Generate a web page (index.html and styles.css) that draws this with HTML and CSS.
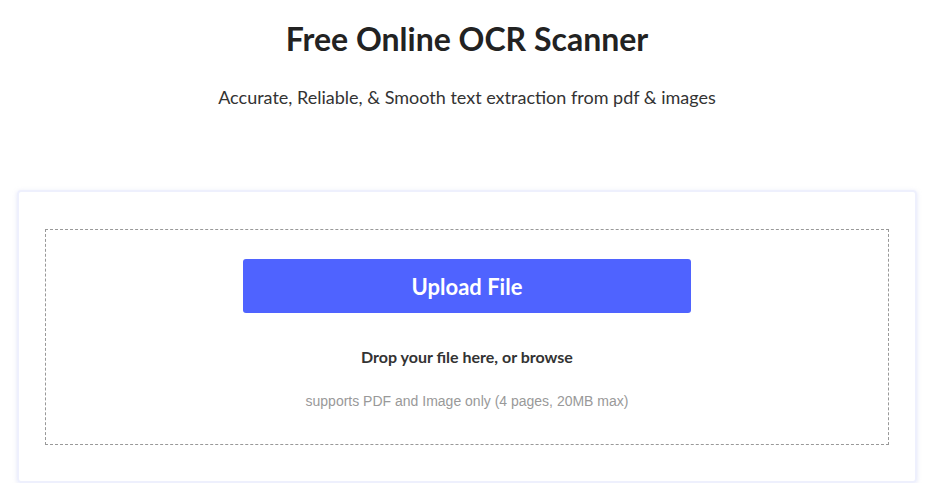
FILE: index.html
```html
<!DOCTYPE html>
<html lang="en">
<head>
    <meta charset="UTF-8">
    <title>Free Online OCR Scanner</title>
    <link rel="stylesheet" href="styles.css">
</head>
<body>
    <h1>Free Online OCR Scanner</h1>
    <p class="subtitle">Accurate, Reliable, &amp; Smooth text extraction from pdf &amp; images</p>

    <div class="card">
        <div class="dropzone">
            <button class="upload-btn">Upload File</button>
            <p class="drop-text">Drop your file here, or browse</p>
            <p class="support-text">supports PDF and Image only (4 pages, 20MB max)</p>
        </div>
    </div>
</body>
</html>
```

FILE: styles.css
```css
body {
    font-family: Lato, "Noto Sans", sans-serif;
    margin: 0;
    color: #222;
    background: #fff;
}
h1 {
    text-align: center;
    font-size: 32px;
    font-weight: 700;
    margin: 19px 0 0;
    color: #222;
}
.subtitle {
    text-align: center;
    font-size: 18px;
    color: #333;
    margin: 28px 0 0;
}
.card {
    width: 900px;
    margin: 82px auto 0;
    border: 2px solid #eef0fd;
    border-radius: 4px;
    box-shadow: 0 1px 4px rgba(200, 205, 240, 0.5);
    padding: 37px 26px 36px;
    box-sizing: border-box;
}
.dropzone {
    border: 1px dashed #999;
    padding: 29px 20px 35px;
    text-align: center;
}
.upload-btn {
    display: block;
    margin: 0 auto;
    width: 448px;
    height: 54px;
    border: none;
    border-radius: 3px;
    background-color: #4f63ff;
    color: #fff;
    font-family: Lato, sans-serif;
    font-weight: 700;
    font-size: 22px;
    cursor: pointer;
}
.drop-text {
    font-size: 16px;
    font-weight: 700;
    color: #333;
    margin: 34px 0 0;
}
.support-text {
    font-family: "Liberation Sans", Arial, sans-serif;
    font-size: 14px;
    color: #999;
    margin: 27px 0 0;
}
```
